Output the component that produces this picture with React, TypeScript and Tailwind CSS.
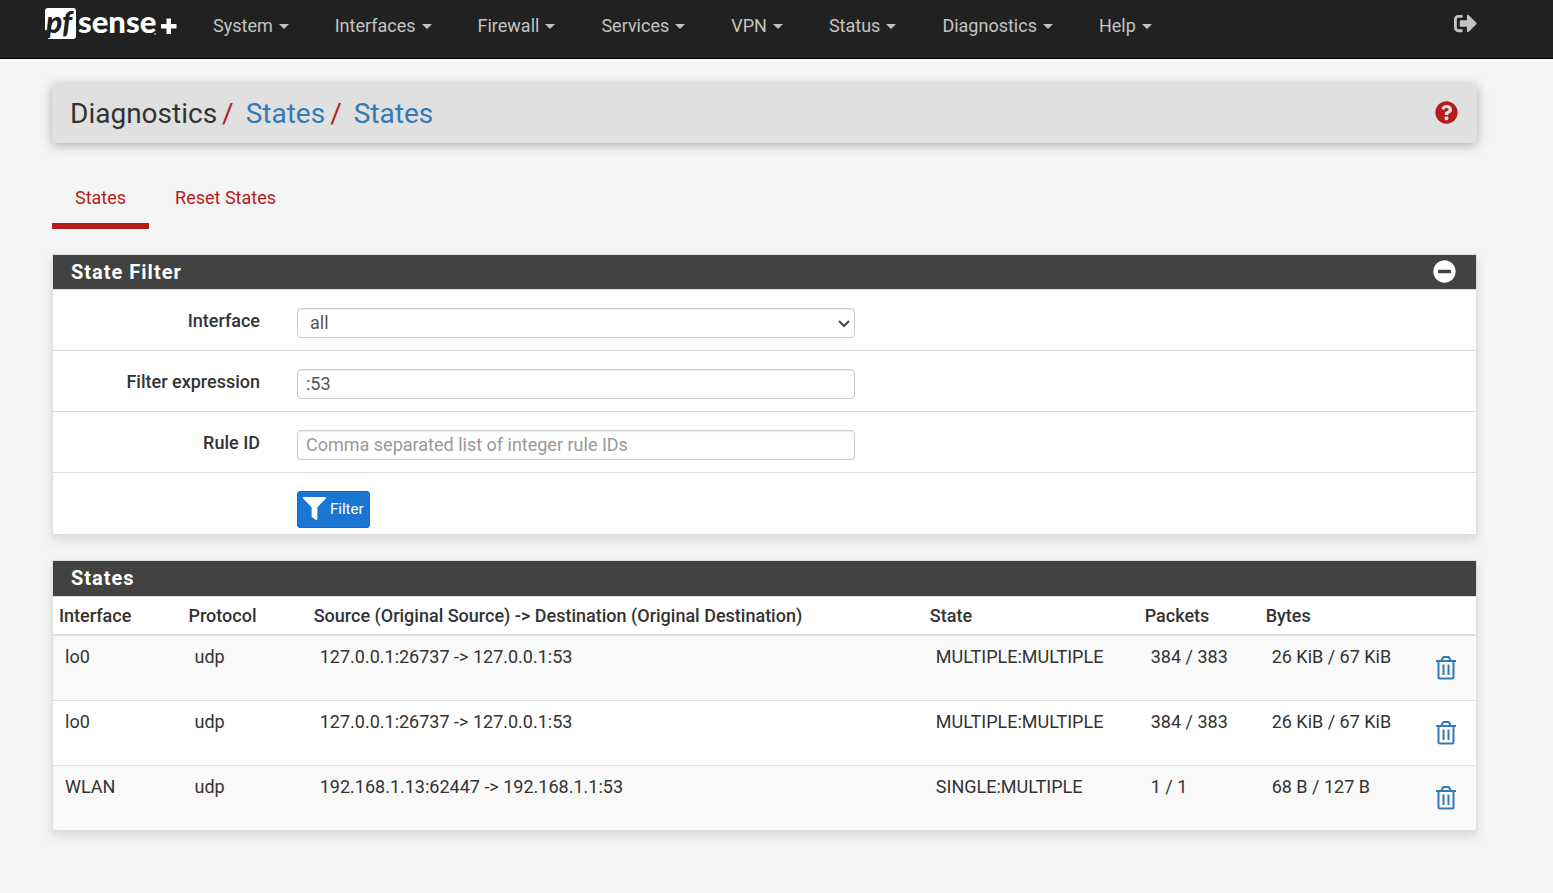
import React from "react";
import { FaFilter, FaMinusCircle, FaQuestionCircle, FaSignOutAlt } from "react-icons/fa";

const MENUS = ["System", "Interfaces", "Firewall", "Services", "VPN", "Status", "Diagnostics", "Help"];

const STATES = [
  { iface: "lo0", proto: "udp", flow: "127.0.0.1:26737 -> 127.0.0.1:53", state: "MULTIPLE:MULTIPLE", packets: "384 / 383", bytes: "26 KiB / 67 KiB" },
  { iface: "lo0", proto: "udp", flow: "127.0.0.1:26737 -> 127.0.0.1:53", state: "MULTIPLE:MULTIPLE", packets: "384 / 383", bytes: "26 KiB / 67 KiB" },
  { iface: "WLAN", proto: "udp", flow: "192.168.1.13:62447 -> 192.168.1.1:53", state: "SINGLE:MULTIPLE", packets: "1 / 1", bytes: "68 B / 127 B" },
];

function Logo() {
  return (
    <a href="#" aria-label="pfSense plus" className="block">
      <svg width="132" height="44" viewBox="0 -8 132 44" className="block">
        <path d="M3 0h25a3 3 0 0 1 3 3v25a3 3 0 0 1-3 3H3l2-8L0 22V3a3 3 0 0 1 3-3z" fill="#fff" />
        <text x="1" y="25" fontFamily="Lato, sans-serif" fontStyle="italic" fontWeight="900" fontSize="30" fill="#212121">pf</text>
        <text x="33" y="25" fontFamily="Lato, sans-serif" fontWeight="900" fontSize="31" fill="#fff">sense</text>
        <circle cx="110" cy="26" r="1" fill="#9a9a9a" />
        <path d="M121.500 10.500h4.500v5.500h5.500v4.500h-5.500v5.500h-4.500v-5.500h-5.500v-4.500h5.500z" fill="#fff" />
      </svg>
    </a>
  );
}

function TrashIcon() {
  return (
    <svg width="20" height="24" viewBox="0 0 20 24" fill="none" stroke="currentColor" strokeWidth="2" className="block">
      <path d="M0 5h20" />
      <path d="M5 5l2-3.4a1 1 0 0 1 .8-.6h4.4a1 1 0 0 1 .8.6L15 5" />
      <path d="M2.5 5v16a1.5 1.5 0 0 0 1.500 1.500h12a1.500 1.500 0 0 0 1.500-1.500V5" />
      <path d="M7.500 8.500v10.500M12.500 8.500v10.500" />
    </svg>
  );
}

function Row({ label, id, children }: { label?: string; id?: string; children: React.ReactNode }) {
  return (
    <div className="flex border-t border-[#dedede] pt-[18px] pb-3 first:border-t-0">
      <div className="w-[244px] shrink-0 pr-[37px] text-right">
        {label && <label htmlFor={id} className="block font-medium">{label}</label>}
      </div>
      <div className="w-[558px]">{children}</div>
    </div>
  );
}

const FIELD =
  "block h-[30px] w-full rounded border border-[#ccc] bg-white text-[#555] shadow-[inset_0_1px_1px_rgba(0,0,0,0.075)] placeholder:text-[#999]";

export default function App() {
  return (
    <div className="min-h-screen bg-[#f5f5f5] pb-10 font-[Roboto,sans-serif] text-[18px] leading-[26px] text-[#333]">
      <header className="flex h-[59px] items-start border-b border-black bg-[#212121] pr-[76px] pl-[45px]">
        <Logo />
        <nav className="flex gap-[46px] pt-[13px] pl-9">
          {MENUS.map((m) => (
            <button key={m} type="button" className="flex items-center gap-[6px] text-[#c3c3c3]">
              {m}
              <span className="border-x-5 border-t-5 border-x-transparent border-t-[#c3c3c3]" />
            </button>
          ))}
        </nav>
        <a href="#" aria-label="Log out" className="ml-auto pt-3 text-[#c3c3c3]">
          <FaSignOutAlt size={23} />
        </a>
      </header>

      <main className="pr-[76px] pl-[52px]">
        <div className="mt-[25px] flex h-[59px] items-center justify-between rounded bg-[#e0e0e0] pr-[19px] pl-[18px] shadow-[0_2px_12px_rgba(0,0,0,0.3)]">
          <ol className="flex text-[28px] leading-9">
            <li>Diagnostics</li>
            <li className="flex"><span className="pr-3 pl-[5px] text-[#b71c1c]">/</span><a href="#" className="text-[#337ab7]">States</a></li>
            <li className="flex"><span className="pr-3 pl-[5px] text-[#b71c1c]">/</span><a href="#" className="text-[#337ab7]">States</a></li>
          </ol>
          <a href="#" aria-label="Help" className="pb-[2px] text-[#b71c1c]"><FaQuestionCircle size={23} /></a>
        </div>

        <nav className="mt-[42px] flex text-[#b71c1c]">
          <a href="#" className="border-b-6 border-[#b71c1c] px-[23px] pb-3">States</a>
          <a href="#" className="px-[26px] pb-3">Reset States</a>
        </nav>

        <section className="mt-[25px] border border-[#dedede] bg-white shadow-[0_5px_10px_rgba(0,0,0,0.12)]">
          <div className="flex h-[35px] items-center justify-between border-b border-[#dedede] bg-[#424242] pr-5 pl-[18px] text-white">
            <h2 className="text-[20px] font-bold tracking-[1px]">State Filter</h2>
            <button type="button" aria-label="Collapse" className="pb-[2px]"><FaMinusCircle size={23} /></button>
          </div>
          <form>
            <Row label="Interface" id="iface">
              <div className="relative">
                <select id="iface" className={`${FIELD} appearance-none pl-3`}>
                  <option>all</option>
                </select>
                <svg width="12" height="8" viewBox="0 0 12 8" fill="none" stroke="#444" strokeWidth="2" className="pointer-events-none absolute top-3 right-[5px]">
                  <path d="M1 1l5 5 5-5" />
                </svg>
              </div>
            </Row>
            <Row label="Filter expression" id="expr">
              <input id="expr" type="text" defaultValue=":53" className={`${FIELD} px-2 pb-[2px]`} />
            </Row>
            <Row label="Rule ID" id="rule">
              <input id="rule" type="text" placeholder="Comma separated list of integer rule IDs" className={`${FIELD} px-2 pb-[2px]`} />
            </Row>
            <div className="h-[62px] border-t border-[#dedede]">
              <Row>
                <button type="button" className="flex h-[37px] items-center gap-1 rounded-[3px] border border-[#1b6bb5] bg-[#1976d2] px-[5px] pb-[2px] text-[15px] text-white">
                  <FaFilter size={23} />
                  Filter
                </button>
              </Row>
            </div>
          </form>
        </section>

        <section className="mt-[25px] border border-[#dedede] bg-white shadow-[0_5px_10px_rgba(0,0,0,0.12)]">
          <h2 className="flex h-9 items-center border-b border-[#dedede] bg-[#424242] pb-[2px] pl-[18px] text-[20px] font-bold tracking-[1px] text-white">States</h2>
          <table className="w-full table-fixed border-collapse text-left">
            <colgroup>
              <col className="w-[9.1%]" />
              <col className="w-[8.8%]" />
              <col className="w-[43.3%]" />
              <col className="w-[15.1%]" />
              <col className="w-[8.5%]" />
              <col />
              <col className="w-[52px]" />
            </colgroup>
            <thead>
              <tr className="h-[38px]">
                {["Interface", "Protocol", "Source (Original Source) -> Destination (Original Destination)", "State", "Packets", "Bytes"].map((h) => (
                  <th key={h} scope="col" className="px-[6px] font-medium">{h}</th>
                ))}
                <th aria-label="Actions" />
              </tr>
            </thead>
            <tbody>
              {STATES.map((s, i) => (
                <tr key={i} className="h-[65px] border-t border-[#dedede] align-top odd:bg-[#f9f9f9] first:border-t-2">
                  {[s.iface, s.proto, s.flow, s.state, s.packets, s.bytes].map((v, j) => (
                    <td key={j} className="px-3 pt-2">{v}</td>
                  ))}
                  <td className="pt-5 pl-3">
                    <button type="button" aria-label="Remove state" className="block text-[#337ab7]"><TrashIcon /></button>
                  </td>
                </tr>
              ))}
            </tbody>
          </table>
        </section>
      </main>
    </div>
  );
}
